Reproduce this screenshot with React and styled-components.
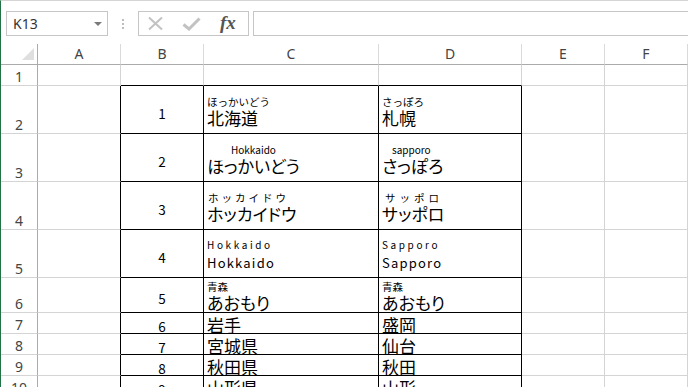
import React from 'react';
import styled, { createGlobalStyle } from 'styled-components';

const GlobalStyle = createGlobalStyle`
  html, body {
    margin: 0;
    padding: 0;
    background: #fff;
  }
  body {
    font-family: "Noto Sans CJK JP", "Noto Sans", sans-serif;
  }
`;

const Window = styled.div`
  width: 688px;
  height: 387px;
  overflow: hidden;
  box-sizing: border-box;
  border-left: 1px solid #217346;
  border-top: 1px solid #d5d5d5;
  background: #fff;
`;

/* formula bar */
const FormulaBar = styled.div`
  height: 43px;
  box-sizing: border-box;
  padding: 10px 0 0 5px;
  display: flex;
  align-items: flex-start;
`;

const NameBox = styled.div`
  width: 102px;
  height: 25px;
  box-sizing: border-box;
  border: 1px solid #c6c6c6;
  display: flex;
  align-items: center;
  justify-content: space-between;
  padding: 0 5px 0 6px;
  font-family: "Noto Sans", sans-serif;
  font-size: 14px;
  color: #333;
`;

const Caret = styled.span`
  width: 0;
  height: 0;
  border-left: 4px solid transparent;
  border-right: 4px solid transparent;
  border-top: 4px solid #7a7a7a;
`;

const Grip = styled.div`
  width: 30px;
  height: 25px;
  display: flex;
  align-items: center;
  justify-content: center;
`;

const FxBox = styled.div`
  width: 111px;
  height: 25px;
  box-sizing: border-box;
  border: 1px solid #c6c6c6;
  display: flex;
  align-items: center;
  padding-left: 8px;
  gap: 18px;
`;

const Fx = styled.span`
  font-family: "Liberation Serif", serif;
  font-style: italic;
  font-weight: 700;
  font-size: 19px;
  color: #555;
  line-height: 1;
  margin-left: 1px;
  margin-top: -2px;
`;

const FormulaInput = styled.div`
  flex: 1;
  height: 25px;
  box-sizing: border-box;
  margin-left: 4px;
  border: 1px solid #c6c6c6;
  border-right: none;
`;

/* sheet */
const Sheet = styled.div`
  display: grid;
  grid-template-columns: 37px 83px 83px 175px 143px 83px 83px;
  grid-template-rows: 21px 21px 48px 48px 48px 48px 35px 21px 21px 21px 21px;
`;

const Corner = styled.div`
  box-sizing: border-box;
  border-right: 1px solid #ababab;
  border-bottom: 1px solid #ababab;
  display: flex;
  align-items: flex-end;
  justify-content: flex-end;
  padding: 0 3px 4px 0;
`;

const Triangle = styled.span`
  width: 0;
  height: 0;
  border-left: 12px solid transparent;
  border-bottom: 12px solid #dfdfdf;
`;

const ColHead = styled.div`
  box-sizing: border-box;
  border-right: 1px solid #dadada;
  border-bottom: 1px solid #ababab;
  display: flex;
  align-items: center;
  justify-content: center;
  font-family: "Noto Sans", sans-serif;
  font-size: 14px;
  color: #444;
  line-height: 1;
`;

const RowHead = styled.div`
  box-sizing: border-box;
  border-right: 1px solid #ababab;
  border-bottom: 1px solid #d4d4d4;
  display: flex;
  align-items: flex-end;
  justify-content: center;
  font-family: "Noto Sans", sans-serif;
  font-size: 14px;
  color: #444;
  line-height: 1;
  padding-bottom: 1px;
`;

const Cell = styled.div`
  box-sizing: border-box;
  min-height: 0;
  border-right: 1px solid ${(p) => (p.$edgeRight ? '#000' : '#d4d4d4')};
  border-bottom: 1px solid ${(p) => (p.$edgeBottom ? '#000' : '#d4d4d4')};
  display: flex;
  flex-direction: column;
  justify-content: center;
  align-items: ${(p) => (p.$center ? 'center' : 'flex-start')};
  padding: 2px 3px 0 3px;
  color: #000;
`;

const Num = styled.div`
  font-size: 13.5px;
  line-height: 14px;
  padding-top: 4px;
`;

const Furi = styled.div`
  font-size: ${(p) => (p.$latin ? '10px' : '10.5px')};
  line-height: 12px;
  white-space: nowrap;
  letter-spacing: ${(p) => p.$spread || 0}px;
  padding-left: ${(p) => p.$indent || 0}px;
`;

const Base = styled.div`
  font-size: ${(p) => (p.$latin ? '13px' : '17px')};
  line-height: 17px;
  letter-spacing: ${(p) => (p.$latin ? '1.2px' : '0')};
  font-feature-settings: "palt";
  white-space: nowrap;
  margin-top: ${(p) => (p.$latin ? '3px' : '1px')};
`;

const cols = ['A', 'B', 'C', 'D', 'E', 'F'];

const rows = [
  { h: 1 },
  {
    h: 2, n: '1',
    c: { furi: 'ほっかいどう', base: '北海道' },
    d: { furi: 'さっぽろ', base: '札幌' },
  },
  {
    h: 3, n: '2',
    c: { furi: 'Hokkaido', base: 'ほっかいどう', latinFuri: true, indent: 24 },
    d: { furi: 'sapporo', base: 'さっぽろ', latinFuri: true, indent: 10 },
  },
  {
    h: 4, n: '3',
    c: { furi: 'ホッカイドウ', base: 'ホッカイドウ', indent: 1, spread: 3 },
    d: { furi: 'サッポロ', base: 'サッポロ', indent: 3, spread: 4 },
  },
  {
    h: 5, n: '4',
    c: { furi: 'Hokkaido', base: 'Hokkaido', latinFuri: true, latin: true, spread: 2.6 },
    d: { furi: 'Sapporo', base: 'Sapporo', latinFuri: true, latin: true, spread: 2.6 },
  },
  {
    h: 6, n: '5',
    c: { furi: '青森', base: 'あおもり' },
    d: { furi: '青森', base: 'あおもり' },
  },
  { h: 7, n: '6', c: { base: '岩手' }, d: { base: '盛岡' } },
  { h: 8, n: '7', c: { base: '宮城県' }, d: { base: '仙台' } },
  { h: 9, n: '8', c: { base: '秋田県' }, d: { base: '秋田' } },
  { h: 10, n: '9', c: { base: '山形県' }, d: { base: '山形' } },
];

const Text = ({ item }) => {
  if (!item) return null;
  return (
    <>
      {item.furi && (
        <Furi $latin={item.latinFuri} $spread={item.spread} $indent={item.indent}>
          {item.furi}
        </Furi>
      )}
      <Base $latin={item.latin}>{item.base}</Base>
    </>
  );
};

const Grid = () => (
  <Sheet>
    <Corner>
      <Triangle />
    </Corner>
    {cols.map((c) => (
      <ColHead key={c}>{c}</ColHead>
    ))}
    {rows.map((r) => {
      const inTable = r.h >= 2;
      return (
        <React.Fragment key={r.h}>
          <RowHead>{r.h}</RowHead>
          <Cell $edgeRight={inTable} />
          <Cell $edgeRight={inTable} $edgeBottom $center>
            {r.n && <Num>{r.n}</Num>}
          </Cell>
          <Cell $edgeRight={inTable} $edgeBottom>
            <Text item={r.c} />
          </Cell>
          <Cell $edgeRight={inTable} $edgeBottom>
            <Text item={r.d} />
          </Cell>
          <Cell />
          <Cell />
        </React.Fragment>
      );
    })}
  </Sheet>
);

export default function App() {
  return (
    <Window>
      <GlobalStyle />
      <FormulaBar>
        <NameBox>
          <span>K13</span>
          <Caret />
        </NameBox>
        <Grip>
          <svg width="4" height="12" viewBox="0 0 4 12">
            <circle cx="2" cy="2" r="1" fill="#a6a6a6" />
            <circle cx="2" cy="6" r="1" fill="#a6a6a6" />
            <circle cx="2" cy="10" r="1" fill="#a6a6a6" />
          </svg>
        </Grip>
        <FxBox>
          <svg width="17" height="15" viewBox="0 0 17 15">
            <path d="M2 1.5 L15 13.5 M15 1.5 L2 13.5" stroke="#c2c2c2" strokeWidth="2" fill="none" />
          </svg>
          <svg width="19" height="14" viewBox="0 0 19 14">
            <path d="M1.5 7.5 L7 12 L17.5 1.5" stroke="#c2c2c2" strokeWidth="3" fill="none" />
          </svg>
          <Fx>fx</Fx>
        </FxBox>
        <FormulaInput />
      </FormulaBar>
      <Grid />
    </Window>
  );
}
